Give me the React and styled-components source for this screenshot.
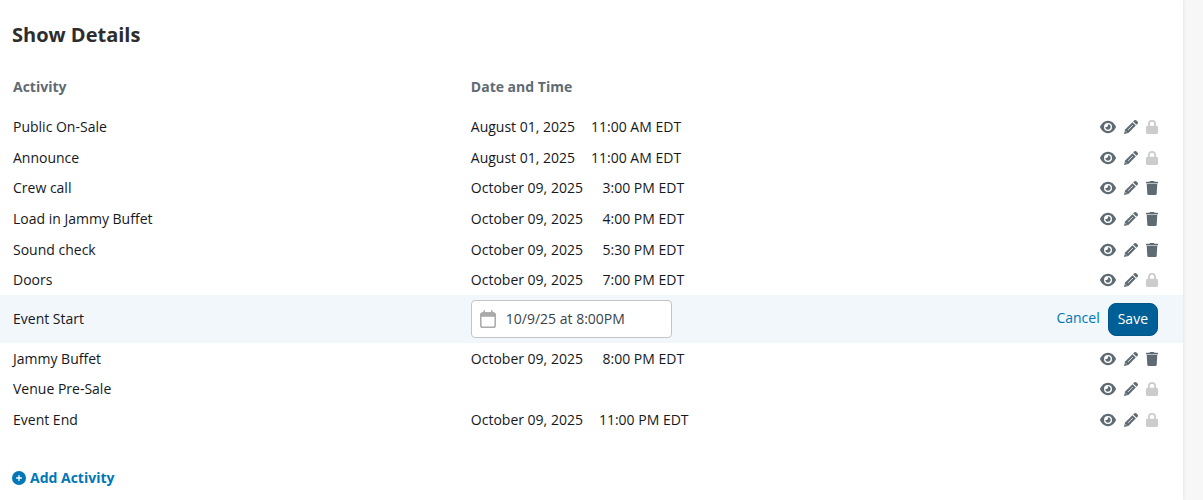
import React, { useState } from "react";
import styled, { createGlobalStyle } from "styled-components";
import { FaCirclePlus, FaEye } from "react-icons/fa6";

const ACTIVITIES = [
  { name: "Public On-Sale", date: "August 01, 2025", time: "11:00 AM EDT", locked: true },
  { name: "Announce", date: "August 01, 2025", time: "11:00 AM EDT", locked: true },
  { name: "Crew call", date: "October 09, 2025", time: " 3:00 PM EDT" },
  { name: "Load in Jammy Buffet", date: "October 09, 2025", time: " 4:00 PM EDT" },
  { name: "Sound check", date: "October 09, 2025", time: " 5:30 PM EDT" },
  { name: "Doors", date: "October 09, 2025", time: " 7:00 PM EDT", locked: true },
  { name: "Event Start", editing: true, value: "10/9/25 at 8:00PM" },
  { name: "Jammy Buffet", date: "October 09, 2025", time: " 8:00 PM EDT" },
  { name: "Venue Pre-Sale", locked: true },
  { name: "Event End", date: "October 09, 2025", time: "11:00 PM EDT", locked: true },
];

const CalendarIcon = () => (
  <svg width="16" height="18" viewBox="0 0 16 18" aria-hidden="true">
    <rect x="0.8" y="3" width="14.4" height="14.2" rx="1.8" fill="none" stroke="#a9a9a9" strokeWidth="1.5" />
    <path d="M0.8 6.8V4.3a2 2 0 0 1 2-2h10.4a2 2 0 0 1 2 2v2.5z" fill="#a9a9a9" />
    <path d="M4.2 0.8v2.5M11.8 0.8v2.5" stroke="#a9a9a9" strokeWidth="1.5" strokeLinecap="round" />
  </svg>
);

const PencilIcon = () => (
  <svg width="14" height="14" viewBox="0 0 14 14" fill="currentColor" aria-hidden="true">
    <path d="M9.2 1.5l1-1a1.6 1.6 0 0 1 2.2 0l1.1 1.1a1.6 1.6 0 0 1 0 2.2l-1 1z" />
    <path d="M8.5 2.2l3.3 3.3-7.4 7.4L0 14l1.1-4.4z" />
    <path d="M4 9.9l4.9-4.9M1.7 11.4l0.9 0.9" stroke="#ffffff" strokeWidth="0.8" />
  </svg>
);

const LockIcon = () => (
  <svg width="12" height="14" viewBox="0 0 12 14" fill="none" aria-hidden="true">
    <path d="M2.9 7V4a3.1 3.1 0 0 1 6.2 0v3" stroke="currentColor" strokeWidth="1.8" />
    <rect x="0" y="5.8" width="12" height="8.2" rx="1.4" fill="currentColor" />
  </svg>
);

const TrashIcon = () => (
  <svg width="12" height="14" viewBox="0 0 12 14" fill="currentColor" aria-hidden="true">
    <path d="M0.5 0.8h3L4.1 0h3.8l0.6 0.8h3q0.5 0 0.5 0.5v0.9H0V1.3Q0 0.8 0.5 0.8z" />
    <path d="M0.7 2.7h10.6l-0.6 10.1a1.2 1.2 0 0 1-1.2 1.2H2.5a1.2 1.2 0 0 1-1.2-1.2z" />
  </svg>
);

const ActivityRow = ({ item }) => (
  <StRow>
    <StCell>{item.name}</StCell>
    <StCell>
      {item.date && (
        <StWhen>
          <span>{item.date}</span>
          <span>{item.time}</span>
        </StWhen>
      )}
    </StCell>
    <StCell>
      <StActions>
        <StIconBtn width="16px" aria-label={`View ${item.name}`}>
          <FaEye size={16} />
        </StIconBtn>
        <StIconBtn width="14px" aria-label={`Edit ${item.name}`}>
          <PencilIcon />
        </StIconBtn>
        {item.locked ? (
          <StIconBtn width="12px" color="#cccccc" disabled aria-label={`${item.name} is locked`}>
            <LockIcon />
          </StIconBtn>
        ) : (
          <StIconBtn width="12px" aria-label={`Delete ${item.name}`}>
            <TrashIcon />
          </StIconBtn>
        )}
      </StActions>
    </StCell>
  </StRow>
);

const EditRow = ({ item }) => {
  const [value, setValue] = useState(item.value);
  return (
    <StEditRow>
      <StCell>{item.name}</StCell>
      <StCell>
        <StDateField>
          <CalendarIcon />
          <StInput
            aria-label={`${item.name} date and time`}
            value={value}
            onChange={(e) => setValue(e.target.value)}
          />
        </StDateField>
      </StCell>
      <StCell>
        <StActions>
          <StCancel>Cancel</StCancel>
          <StSave>Save</StSave>
        </StActions>
      </StCell>
    </StEditRow>
  );
};

const App = () => (
  <StPage>
    <GlobalStyle />
    <StPanel>
      <StTitle>Show Details</StTitle>
      <StTable>
        <thead>
          <tr>
            <StHead width="38.7%">Activity</StHead>
            <StHead>Date and Time</StHead>
            <StHead width="20%" aria-label="Actions" />
          </tr>
        </thead>
        <tbody>
          {ACTIVITIES.map((item) =>
            item.editing ? (
              <EditRow key={item.name} item={item} />
            ) : (
              <ActivityRow key={item.name} item={item} />
            )
          )}
        </tbody>
      </StTable>
      <StAdd>
        <FaCirclePlus size={14} />
        Add Activity
      </StAdd>
    </StPanel>
  </StPage>
);

export default App;

const GlobalStyle = createGlobalStyle`
  * {
    box-sizing: border-box;
  }
  body {
    margin: 0;
    background: #f7f7f7;
    color: #15181c;
    font-family: "Open Sans", sans-serif;
    font-size: 14px;
    line-height: 20px;
  }
  button,
  input {
    font: inherit;
  }
`;

const StPage = styled.div`
  display: flex;
  min-height: 100vh;
  padding-right: 20px;
`;
const StPanel = styled.main`
  flex: 1;
  padding: 20px 0 12px;
  background: #ffffff;
  box-shadow: 0 0 4px rgba(0, 0, 0, 0.1);
`;
const StTitle = styled.h2`
  margin: 0 12px;
  color: #2d2d2d;
  font-size: 20px;
  font-weight: 700;
  line-height: 30px;
`;
const StTable = styled.table`
  width: 100%;
  margin-top: 13px;
  border-collapse: collapse;
  table-layout: fixed;
`;
const StHead = styled.th`
  width: ${({ width }) => width || "auto"};
  height: 48px;
  padding: 0 13px;
  color: #5f6b72;
  font-weight: 700;
  text-align: left;
`;
const StRow = styled.tr`
  height: 31px;
  &:nth-child(3n) {
    height: 30px;
  }
`;
const StEditRow = styled.tr`
  height: 48px;
  background: #f2f7fc;
`;
const StCell = styled.td`
  padding: 0 13px;
  vertical-align: middle;
  &:last-child {
    padding-right: 25px;
  }
`;
const StWhen = styled.div`
  display: flex;
  gap: 16px;
  white-space: pre;
`;
const StActions = styled.div`
  display: flex;
  align-items: center;
  justify-content: flex-end;
  gap: 8px;
`;
const StIconBtn = styled.button`
  display: flex;
  align-items: center;
  justify-content: center;
  width: ${({ width }) => width};
  height: 20px;
  padding: 0;
  border: none;
  background: none;
  color: ${({ color }) => color || "#5f6b72"};
  cursor: pointer;
  &:disabled {
    cursor: default;
  }
`;
const StDateField = styled.label`
  display: flex;
  align-items: center;
  gap: 10px;
  width: 201px;
  height: 38px;
  padding: 0 8px;
  border: 1px solid #c4c4c4;
  border-radius: 4px;
  background: #ffffff;
`;
const StInput = styled.input`
  flex: 1;
  min-width: 0;
  padding: 0;
  border: none;
  outline: none;
  background: none;
  color: #3a434b;
`;
const StCancel = styled.button`
  padding: 0 0 3px;
  border: none;
  background: none;
  color: #0077b6;
  cursor: pointer;
`;
const StSave = styled.button`
  height: 33px;
  padding: 0 9px;
  border: 1px solid #005587;
  border-radius: 8px;
  background: #005f96;
  color: #ffffff;
  font-weight: 500;
  cursor: pointer;
`;
const StAdd = styled.button`
  display: flex;
  align-items: center;
  gap: 4px;
  margin: 33px 12px 0;
  padding: 0;
  border: none;
  background: none;
  color: #0077b6;
  font-weight: 700;
  cursor: pointer;
`;
